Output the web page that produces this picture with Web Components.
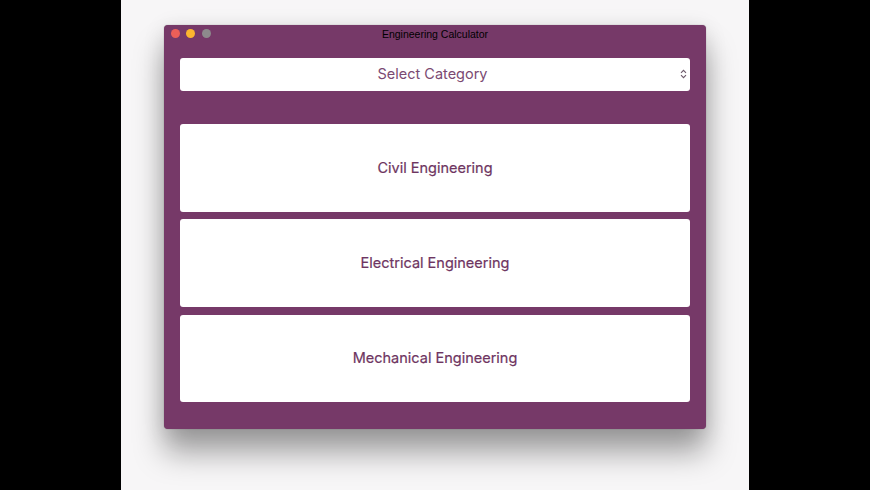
<!DOCTYPE html>
<html lang="en"><head><meta charset="utf-8"><title>Engineering Calculator</title>
<style>
html,body{margin:0;height:100%;background:#000;overflow:hidden}
body{display:flex;justify-content:center;font-family:Inter,"Liberation Sans",sans-serif}
</style></head><body>
<template id="t-desktop"><style>
:host{display:flex;justify-content:center;width:628px;height:490px;padding-top:25px;box-sizing:border-box;background:#f7f6f7;flex:none}
</style><slot></slot></template>
<template id="t-window"><style>
:host{display:flex;flex-direction:column;width:542px;height:404px;box-sizing:border-box;background:#763968;border-radius:4px;box-shadow:0 0 1px rgba(60,50,60,.6),0 24px 30px rgba(0,0,0,.34),0 4px 22px rgba(0,0,0,.12);flex:none}
.bar{display:flex;align-items:center;height:17px;flex:none;padding:0 6.5px;gap:6.5px;position:relative}
.t{position:absolute;left:0;right:0;top:.5px;text-align:center;font:10.5px/16px "Liberation Sans",Arial,sans-serif;color:#000}
.d{width:9px;height:9px;border-radius:50%;flex:none}
.c{display:flex;flex-direction:column;padding:16px 16px 0}
</style><div class="bar"><span class="d" style="background:#ec5f58"></span><span class="d" style="background:#fcb52f"></span><span class="d" style="background:#8d8a8c"></span><span class="t"><slot name="title"></slot></span></div><div class="c"><slot></slot></div></template>
<template id="t-select"><style>
:host{display:flex;align-items:center;justify-content:center;height:33px;margin-bottom:33px;background:#fff;border-radius:3px;position:relative;color:#7b4a72;font:400 14.5px/31px Inter,"Liberation Sans",sans-serif}
.l{display:block;height:33px;margin-left:-5px}
svg{position:absolute;right:3px;top:11px}
</style><span class="l"><slot></slot></span><svg width="7" height="10" viewBox="0 0 7 10" fill="none" stroke="#6d5a6b" stroke-width="1.1"><path d="M1 3.8 3.5 1.3 6 3.8M1 6.2 3.5 8.7 6 6.2"/></svg></template>
<template id="t-card"><style>
:host{display:flex;align-items:center;justify-content:center;height:87.5px;margin-bottom:7.8px;background:#fff;border-radius:3px;color:#6e3561;font:400 14.5px/20px Inter,"Liberation Sans",sans-serif;-webkit-text-stroke:.2px #6e3561}
</style><slot></slot></template>
<app-desktop><app-window><span slot="title">Engineering Calculator</span><cat-select>Select Category</cat-select><eng-card>Civil Engineering</eng-card><eng-card>Electrical Engineering</eng-card><eng-card>Mechanical Engineering</eng-card></app-window></app-desktop>
<script>
for(const [n,i] of [['app-desktop','t-desktop'],['app-window','t-window'],['cat-select','t-select'],['eng-card','t-card']]){
customElements.define(n,class extends HTMLElement{constructor(){super();this.attachShadow({mode:'open'}).appendChild(document.getElementById(i).content.cloneNode(true))}});
}
</script></body></html>
